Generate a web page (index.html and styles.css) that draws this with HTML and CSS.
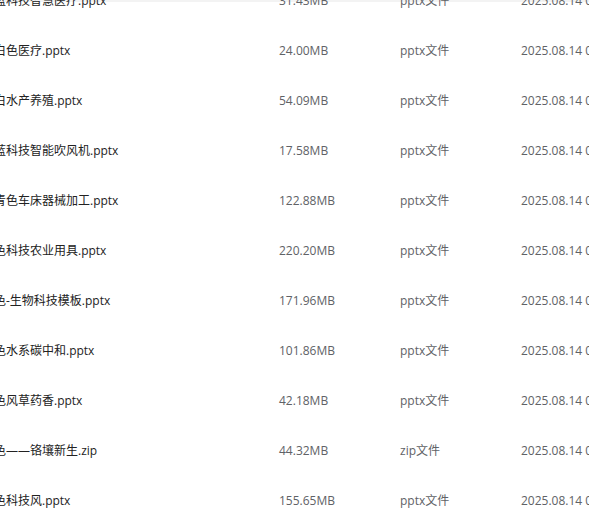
FILE: index.html
```html
<!DOCTYPE html>
<html lang="zh-CN">
<head>
    <meta charset="UTF-8">
    <title>文件列表</title>
    <link rel="stylesheet" href="styles.css">
</head>
<body>
    <div class="header-edge"></div>
    <div class="file-list">
        <div class="file-row">
            <span class="name">蓝科技智慧医疗.pptx</span>
            <span class="size">31.43MB</span>
            <span class="type">pptx文件</span>
            <span class="date">2025.08.14 09:32:15</span>
        </div>
        <div class="file-row">
            <span class="name">白色医疗.pptx</span>
            <span class="size">24.00MB</span>
            <span class="type">pptx文件</span>
            <span class="date">2025.08.14 09:32:15</span>
        </div>
        <div class="file-row">
            <span class="name">白水产养殖.pptx</span>
            <span class="size">54.09MB</span>
            <span class="type">pptx文件</span>
            <span class="date">2025.08.14 09:32:15</span>
        </div>
        <div class="file-row">
            <span class="name">蓝科技智能吹风机.pptx</span>
            <span class="size">17.58MB</span>
            <span class="type">pptx文件</span>
            <span class="date">2025.08.14 09:32:15</span>
        </div>
        <div class="file-row">
            <span class="name">青色车床器械加工.pptx</span>
            <span class="size">122.88MB</span>
            <span class="type">pptx文件</span>
            <span class="date">2025.08.14 09:32:15</span>
        </div>
        <div class="file-row">
            <span class="name">色科技农业用具.pptx</span>
            <span class="size">220.20MB</span>
            <span class="type">pptx文件</span>
            <span class="date">2025.08.14 09:32:15</span>
        </div>
        <div class="file-row">
            <span class="name">色-生物科技模板.pptx</span>
            <span class="size">171.96MB</span>
            <span class="type">pptx文件</span>
            <span class="date">2025.08.14 09:32:15</span>
        </div>
        <div class="file-row">
            <span class="name">色水系碳中和.pptx</span>
            <span class="size">101.86MB</span>
            <span class="type">pptx文件</span>
            <span class="date">2025.08.14 09:32:15</span>
        </div>
        <div class="file-row">
            <span class="name">色风草药香.pptx</span>
            <span class="size">42.18MB</span>
            <span class="type">pptx文件</span>
            <span class="date">2025.08.14 09:32:15</span>
        </div>
        <div class="file-row">
            <span class="name">色——铬壤新生.zip</span>
            <span class="size">44.32MB</span>
            <span class="type">zip文件</span>
            <span class="date">2025.08.14 09:32:15</span>
        </div>
        <div class="file-row">
            <span class="name">色科技风.pptx</span>
            <span class="size">155.65MB</span>
            <span class="type">pptx文件</span>
            <span class="date">2025.08.14 09:32:15</span>
        </div>
    </div>
</body>
</html>
```

FILE: styles.css
```css
body {
    margin: 0;
    overflow: hidden;
    background: #fff;
    font-family: "Open Sans", "Noto Sans CJK SC", sans-serif;
    font-size: 12px;
}
.header-edge {
    height: 2px;
    background-color: #f3f3f3;
}
.file-list {
    margin-top: -27px;
    margin-left: -6px;
}
.file-row {
    display: grid;
    grid-template-columns: 285px 121px 121px 200px;
    align-items: center;
    height: 50px;
    white-space: nowrap;
}
.name {
    color: #222;
}
.size, .type, .date {
    color: #606266;
}
```
